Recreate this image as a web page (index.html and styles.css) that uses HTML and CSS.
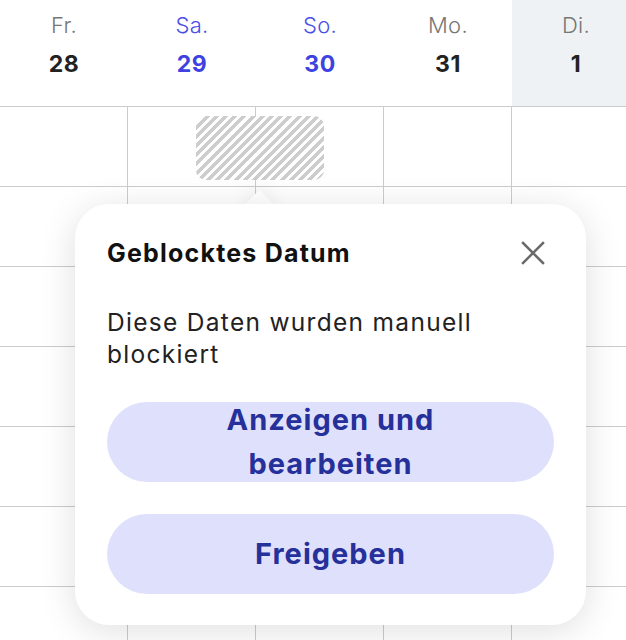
FILE: index.html
```html
<!DOCTYPE html>
<html lang="de">
<head>
<meta charset="utf-8">
<title>Kalender</title>
<link rel="stylesheet" href="styles.css">
</head>
<body>
<div class="calendar">
  <div class="header">
    <div class="day"><span class="dname">Fr.</span><span class="dnum">28</span></div>
    <div class="day weekend"><span class="dname">Sa.</span><span class="dnum">29</span></div>
    <div class="day weekend"><span class="dname">So.</span><span class="dnum">30</span></div>
    <div class="day"><span class="dname">Mo.</span><span class="dnum">31</span></div>
    <div class="day today"><span class="dname">Di.</span><span class="dnum">1</span></div>
  </div>
  <div class="grid">
    <div class="cell"></div><div class="cell"></div><div class="cell"></div><div class="cell"></div><div class="cell"></div>
    <div class="cell"></div><div class="cell"></div><div class="cell"></div><div class="cell"></div><div class="cell"></div>
    <div class="cell"></div><div class="cell"></div><div class="cell"></div><div class="cell"></div><div class="cell"></div>
    <div class="cell"></div><div class="cell"></div><div class="cell"></div><div class="cell"></div><div class="cell"></div>
    <div class="cell"></div><div class="cell"></div><div class="cell"></div><div class="cell"></div><div class="cell"></div>
    <div class="cell"></div><div class="cell"></div><div class="cell"></div><div class="cell"></div><div class="cell"></div>
    <div class="cell"></div><div class="cell"></div><div class="cell"></div><div class="cell"></div><div class="cell"></div>
  </div>

  <div class="blocked"></div>

  <div class="arrow"></div>
  <div class="popover" role="dialog">
    <div class="pop-head">
      <h2 class="pop-title">Geblocktes Datum</h2>
      <button class="close" aria-label="Schließen">
        <svg width="24" height="24" viewBox="0 0 24 24" fill="none" stroke="#6a6a6a" stroke-width="2.5" stroke-linecap="square">
          <path d="M2 2 L22 22 M22 2 L2 22"/>
        </svg>
      </button>
    </div>
    <p class="pop-text">Diese Daten wurden manuell blockiert</p>
    <button class="pill"><span>Anzeigen und bearbeiten</span></button>
    <button class="pill"><span>Freigeben</span></button>
  </div>
</div>
</body>
</html>
```
FILE: styles.css
```css
html, body {
  margin: 0;
  padding: 0;
  background: #fff;
}
body {
  width: 626px;
  height: 640px;
  overflow: hidden;
  font-family: Inter, "Noto Sans", sans-serif;
}
.calendar {
  position: relative;
  width: 640px;
  height: 640px;
}
.header {
  display: grid;
  grid-template-columns: repeat(5, 128px);
  height: 106px;
  border-bottom: 1px solid #cccccc;
}
.day {
  display: flex;
  flex-direction: column;
  align-items: center;
  padding-top: 10px;
}
.today {
  background: #eff2f4;
}
.dname {
  font-size: 22px;
  font-weight: 300;
  color: #767676;
  line-height: 30px;
  letter-spacing: 0.3px;
}
.dnum {
  font-size: 23px;
  font-weight: 700;
  color: #222222;
  line-height: 30px;
  margin-top: 9px;
  letter-spacing: 0.5px;
}
.weekend .dname {
  color: #4a4fe6;
}
.weekend .dnum {
  color: #3d42e0;
}
.grid {
  display: grid;
  grid-template-columns: repeat(5, 128px);
  grid-auto-rows: 80px;
}
.cell {
  border-right: 1px solid #cccccc;
  border-bottom: 1px solid #cccccc;
}
.blocked {
  position: absolute;
  left: 196px;
  top: 116px;
  width: 128px;
  height: 64px;
  border-radius: 10px;
  background: repeating-linear-gradient(135deg, #cdcdcd 0 3.5px, #ffffff 3.5px 6.5px);
}
.arrow {
  position: absolute;
  left: 249px;
  top: 194px;
  width: 21px;
  height: 21px;
  background: #fff;
  transform: rotate(45deg);
  box-shadow: 0 0 20px rgba(0, 0, 0, 0.10);
}
.popover {
  position: absolute;
  left: 75px;
  top: 204px;
  width: 511px;
  box-sizing: border-box;
  padding: 28px 32px 31px;
  background: #fff;
  border-radius: 34px;
  box-shadow: 0 6px 36px rgba(0, 0, 0, 0.13);
  display: flex;
  flex-direction: column;
}
.pop-head {
  display: flex;
  align-items: center;
  justify-content: space-between;
  height: 42px;
}
.pop-title {
  margin: 0;
  font-size: 25px;
  font-weight: 700;
  letter-spacing: 1.2px;
  color: #111111;
}
.close {
  width: 42px;
  height: 42px;
  padding: 0;
  border: 0;
  background: transparent;
  display: flex;
  align-items: center;
  justify-content: center;
}
.pop-text {
  margin: 32px 0 0;
  font-size: 24.5px;
  line-height: 32px;
  letter-spacing: 1.3px;
  color: #222222;
}
.pill {
  margin-top: 32px;
  height: 80px;
  box-sizing: border-box;
  padding: 0 56px;
  border: 0;
  border-radius: 40px;
  background: #dfe0fb;
  color: #26309a;
  font-family: inherit;
  font-size: 29px;
  font-weight: 700;
  line-height: 44px;
  letter-spacing: 1px;
  text-align: center;
  display: flex;
  align-items: center;
  justify-content: center;
}
```
